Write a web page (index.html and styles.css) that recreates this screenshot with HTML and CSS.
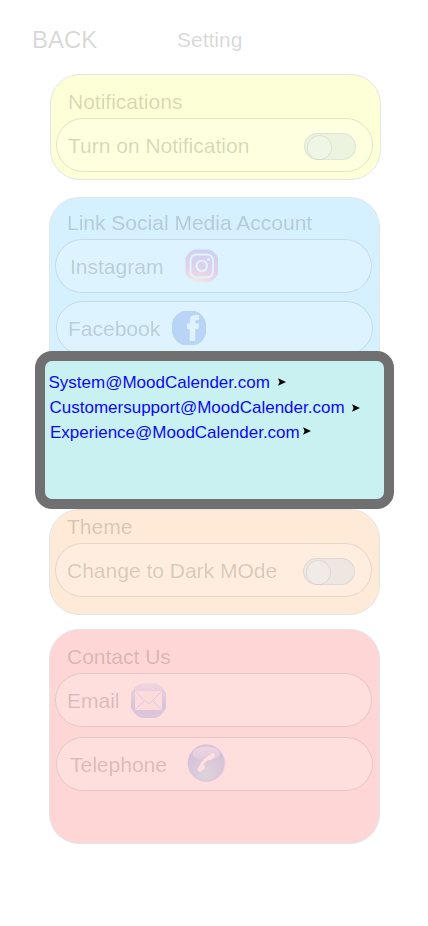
FILE: index.html
```html
<!DOCTYPE html>
<html lang="en">
<head>
<meta charset="utf-8">
<title>Setting</title>
<link rel="stylesheet" href="styles.css">
</head>
<body>
<main class="screen">
  <header class="topbar">
    <span class="back">BACK</span>
    <h1 class="title">Setting</h1>
  </header>

  <section class="panel notifications">
    <h2>Notifications</h2>
    <div class="row"><span>Turn on Notification</span><i class="toggle"></i></div>
  </section>

  <section class="panel social">
    <h2>Link Social Media Account</h2>
    <div class="row instagram"><span>Instagram</span>
      <svg width="34" height="34" viewBox="0 0 34 34">
        <defs>
          <linearGradient id="ig" x1="0.6" y1="0" x2="0.35" y2="1"><stop offset="0" stop-color="#cdd0f6"/><stop offset=".5" stop-color="#dbd1ec"/><stop offset=".8" stop-color="#ebd8e5"/><stop offset="1" stop-color="#eaeee8"/></linearGradient>
        </defs>
        <path d="M10 .5H24Q30 2 33 9V25Q30 31 24 33.500H10Q4 31 .5 25V9Q4 2 10 .5Z" fill="url(#ig)"/>
        <g fill="none" stroke="#e3f2fc" stroke-width="2"><rect x="5.500" y="5.500" width="22.500" height="23" rx="6"/><circle cx="16.800" cy="17" r="5.200"/></g>
        <circle cx="23.500" cy="10.500" r="1.500" fill="#e3f2fc"/>
      </svg>
    </div>
    <div class="row facebook"><span>Facebook</span>
      <svg width="34" height="34" viewBox="0 0 34 34">
        <path d="M11 0H23Q27 1 30 4.500Q33 8 34 12V23Q33 27 29.500 30.500Q26 33.500 23 34H11Q7 33 4 29.500Q1 26 0 22V12Q1 7 4.500 4Q8 1 11 0Z" fill="#bad4f5"/>
        <path d="M17.700 30V18H15V12.500H17.700V10Q17.700 4 23.500 4H27V9H25Q23.200 9 23.200 10.800V12.500H27L26.500 18H23.200V30Z" fill="#def3ff"/>
      </svg>
    </div>
  </section>

  <section class="panel theme">
    <h2>Theme</h2>
    <div class="row"><span>Change to Dark MOde</span><i class="toggle"></i></div>
  </section>

  <section class="panel contact">
    <h2>Contact Us</h2>
    <div class="row email"><span>Email</span>
      <svg width="35" height="35" viewBox="0 0 35 35">
        <defs><linearGradient id="mail" x2="0" y2="1"><stop offset="0" stop-color="#f3d7df"/><stop offset=".35" stop-color="#e3cbdc"/><stop offset=".6" stop-color="#dac4da"/><stop offset="1" stop-color="#dcc6dc"/></linearGradient></defs>
        <path d="M11 0H24Q31 2 35 10V25Q31 33 24 35H11Q4 33 0 25V10Q4 2 11 0Z" fill="url(#mail)"/>
        <path d="M4 8H31V27H4Z" fill="#fddbdd"/>
        <path d="M4.500 8.500L15.500 19.500Q17.500 21.500 19.500 19.500L30.500 8.500M4.500 26.500L13.500 17.500M30.500 26.500L21.500 17.500" fill="none" stroke="#dfc7dc"/>
      </svg>
    </div>
    <div class="row telephone"><span>Telephone</span>
      <svg width="40" height="40" viewBox="0 0 40 40">
        <defs>
          <radialGradient id="ball" cx=".5" cy=".82" r=".75"><stop offset="0" stop-color="#dcd4dc"/><stop offset=".55" stop-color="#dac8d9"/><stop offset="1" stop-color="#d6bfd7"/></radialGradient>
          <linearGradient id="shine" x2="0" y2="1"><stop offset="0" stop-color="#f0d5e1"/><stop offset="1" stop-color="#dfcbdd"/></linearGradient>
        </defs>
        <circle cx="19.500" cy="20.200" r="19" fill="#f4d5dd"/>
        <circle cx="19.200" cy="20" r="18" fill="url(#ball)" stroke="#d9c3da"/>
        <ellipse cx="19.200" cy="10.500" rx="13.500" ry="7" fill="url(#shine)"/>
        <g fill="none" stroke="#ffdfdf" stroke-linejoin="round">
          <path d="M13.500 25.500Q14.500 18 25 13" stroke-width="3.200"/>
          <path d="M12.800 26.500L15.600 24.200M22.600 14.800L25.600 12.500" stroke-width="4.600" stroke-linecap="round"/>
        </g>
      </svg>
    </div>
  </section>

  <aside class="dialog">
    <a class="mail system"><span>System@MoodCalender.com</span><svg class="arrow" width="8" height="8" viewBox="0 0 8 8"><path d="M0 .3L8 4L0 7.700L1.600 4Z"/></svg></a>
    <a class="mail support"><span>Customersupport@MoodCalender.com</span><svg class="arrow" width="8" height="8" viewBox="0 0 8 8"><path d="M0 .3L8 4L0 7.700L1.600 4Z"/></svg></a>
    <a class="mail experience"><span>Experience@MoodCalender.com</span><svg class="arrow" width="8" height="8" viewBox="0 0 8 8"><path d="M0 .3L8 4L0 7.700L1.600 4Z"/></svg></a>
  </aside>
</main>
</body>
</html>
```
FILE: styles.css
```css
* { box-sizing: border-box; }

body {
  margin: 0;
  background: #fff;
  font-family: "Liberation Sans", Arial, sans-serif;
  font-size: 21px;
  line-height: 24px;
  color: rgba(0, 0, 0, .17);
}

.screen {
  position: relative;
  width: 428px;
  height: 926px;
  overflow: hidden;
}

.topbar {
  display: flex;
  align-items: flex-start;
  height: 74px;
  padding: 26px 0 0 32px;
}

.back {
  width: 145px;
  font-size: 24px;
  line-height: 28px;
}

h1, h2 {
  margin: 0;
  font-size: 21px;
  font-weight: 400;
  white-space: nowrap;
}

.title { padding-top: 2px; }

.panel {
  width: 331px;
  margin-left: 49px;
  padding: 0 0 0 5px;
  border: 1px solid #e3e5e8;
  border-radius: 30px;
}

.panel h2 { padding-left: 12px; }

.row {
  display: flex;
  align-items: center;
  width: 317px;
  height: 54px;
  padding-left: 11px;
  border: 1px solid rgba(0, 0, 0, .1);
  border-radius: 27px;
  background: rgba(255, 255, 255, .2);
  white-space: nowrap;
}

.row span { padding-top: 1px; }
.row svg { flex: none; }

.toggle {
  width: 52px;
  height: 27px;
  margin: 3px 16px 0 auto;
  padding: 1px 2px;
  border: 1px solid rgba(0, 0, 0, .06);
  border-radius: 14px;
  background: rgba(170, 200, 235, .2);
}

.toggle::before {
  content: "";
  display: block;
  width: 23px;
  height: 23px;
  border: 1px solid rgba(0, 0, 0, .08);
  border-radius: 50%;
  background: rgba(255, 255, 255, .2);
}

.notifications {
  height: 106px;
  margin-left: 50px;
  padding-top: 15px;
  background: #fdffd6;
}

.notifications .row { margin-top: 4px; }

.social {
  height: 304px;
  margin-top: 17px;
  padding-top: 13px;
  background: #d5f1ff;
}

.social .row { margin-top: 4px; }
.instagram { padding-left: 14px; }
.instagram svg { margin-left: 22px; }
.social .facebook { margin: 8px 0 0 1px; padding-left: 11px; }
.facebook svg { margin-left: 12px; }

.theme {
  height: 106px;
  margin-top: 8px;
  padding-top: 5px;
  background: #ffead7;
}

.theme .row { margin-top: 4px; }

.contact {
  height: 215px;
  margin-top: 14px;
  padding-top: 15px;
  background: #ffd6d6;
}

.contact .row { margin-top: 4px; }
.email svg { margin-left: 11px; }
.contact .telephone { margin: 10px 0 0 1px; padding-left: 13px; }
.telephone svg { margin: -3px 0 0 20px; }

.dialog {
  position: absolute;
  left: 35px;
  top: 351px;
  width: 359px;
  height: 158px;
  padding: 9px 0 0 3px;
  border: 10px solid #707070;
  border-radius: 17px;
  background: #caf1f1;
  color: #0a0af5;
  font-size: 17px;
}

.mail {
  display: flex;
  align-items: center;
  height: 25px;
}

.arrow { fill: #000; }
.system { padding-left: .5px; }
.system .arrow { margin: -1px 0 0 8px; }
.support { padding-left: 1.5px; }
.support .arrow { margin: 1px 0 0 7.5px; }
.experience { padding-left: 2px; }
.experience .arrow { margin: -3px 0 0 3px; }
```
